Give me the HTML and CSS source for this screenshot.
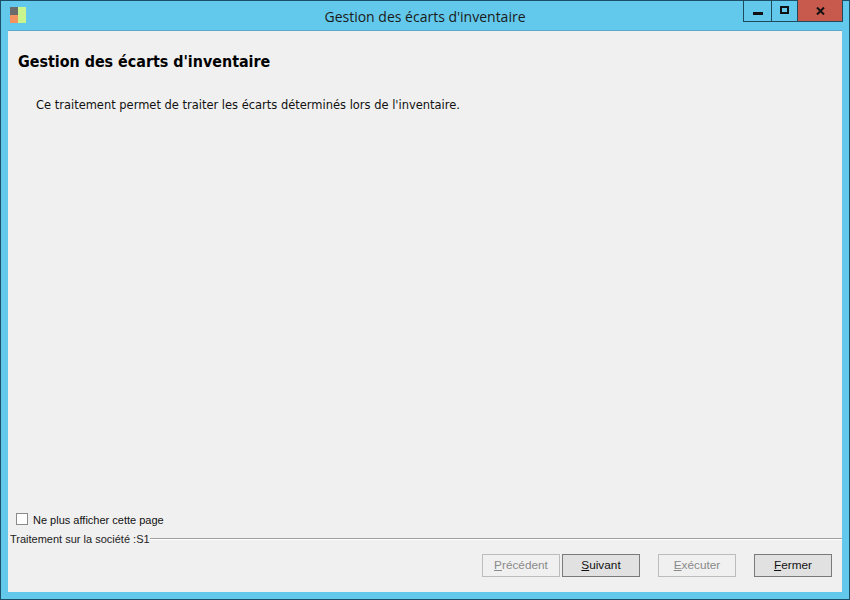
FILE: index.html
```html
<!DOCTYPE html>
<html lang="fr">
<head>
    <meta charset="UTF-8">
    <title>Gestion des écarts d'inventaire</title>
    <link rel="stylesheet" href="styles.css">
</head>
<body>
    <div class="window">
        <div class="titlebar">
            <svg class="app-icon" width="16" height="16" viewBox="0 0 16 16">
                <rect x="0" y="0" width="8" height="8" fill="#6b6b6b"/>
                <rect x="0" y="8" width="8" height="8" fill="#f59360"/>
                <rect x="8" y="0" width="8" height="16" fill="#c9f58c"/>
            </svg>
            <div class="title">Gestion des écarts d'inventaire</div>
            <div class="controls">
                <div class="ctl ctl-min"><span class="min-glyph"></span></div>
                <div class="ctl ctl-max"><span class="max-glyph"></span></div>
                <div class="ctl ctl-close">
                    <svg width="9" height="8" viewBox="0 0 9 8">
                        <path d="M1 0.5 L8 7.5 M8 0.5 L1 7.5" stroke="#111" stroke-width="2" fill="none"/>
                    </svg>
                </div>
            </div>
        </div>
        <div class="content">
            <h1>Gestion des écarts d'inventaire</h1>
            <p class="desc">Ce traitement permet de traiter les écarts déterminés lors de l'inventaire.</p>
            <div class="spacer"></div>
            <label class="check"><span class="box"></span>Ne plus afficher cette page</label>
            <div class="legend"><span>Traitement sur la société :S1</span><div class="rule"></div></div>
            <div class="buttons">
                <div class="btn disabled"><u>P</u>récédent</div>
                <div class="btn"><u>S</u>uivant</div>
                <div class="btn disabled gap"><u>E</u>xécuter</div>
                <div class="btn gap"><u>F</u>ermer</div>
            </div>
        </div>
    </div>
</body>
</html>
```

FILE: styles.css
```css
html, body {
    margin: 0;
    height: 100%;
}
.window {
    box-sizing: border-box;
    width: 850px;
    height: 600px;
    background-color: #63c9ec;
    border: 1px solid #1d4f66;
    padding: 0 7px 7px 7px;
    display: flex;
    flex-direction: column;
}
.titlebar {
    height: 29px;
    display: flex;
    position: relative;
    justify-content: center;
    flex-shrink: 0;
}
.app-icon {
    position: absolute;
    left: 2px;
    top: 6px;
}
.title {
    font-family: "Open Sans", sans-serif;
    font-size: 14px;
    color: #1a1a1a;
    margin-top: 6px;
    line-height: 20px;
}
.controls {
    position: absolute;
    top: -1px;
    right: -1px;
    display: flex;
    height: 22px;
    border: 1px solid #1f4a5e;
    border-top: none;
    box-sizing: border-box;
}
.ctl {
    display: flex;
    align-items: center;
    justify-content: center;
}
.ctl-min {
    width: 27px;
    border-right: 1px solid #1f4a5e;
}
.ctl-max {
    width: 25px;
    border-right: 1px solid #1f4a5e;
}
.ctl-close {
    width: 44px;
    background-color: #c75a4c;
}
.min-glyph {
    width: 10px;
    height: 3px;
    background: #111;
    margin-top: 5px;
}
.max-glyph {
    box-sizing: border-box;
    width: 9px;
    height: 8px;
    border: 2px solid #111;
    margin-bottom: 2px;
}
.content {
    flex: 1;
    background-color: #f0f0f0;
    display: flex;
    flex-direction: column;
    font-family: "Liberation Sans", sans-serif;
    color: #111;
    border-top: 1px solid #5aa9c8;
}
h1 {
    font-family: "DejaVu Sans", sans-serif;
    font-stretch: condensed;
    font-size: 15.9px;
    font-weight: bold;
    margin: 22px 0 0 10px;
    line-height: 18px;
    color: #000;
}
.desc {
    font-family: "DejaVu Sans", sans-serif;
    font-size: 11.48px;
    margin: 26px 0 0 28px;
    line-height: 16px;
}
.spacer {
    flex: 1;
}
.check {
    display: flex;
    align-items: center;
    font-size: 11px;
    margin-left: 8px;
    height: 16px;
}
.box {
    box-sizing: border-box;
    width: 12px;
    height: 12px;
    background: #fff;
    border: 1px solid #8a8a8a;
    margin: 0 5px 3px 0;
}
.legend {
    display: flex;
    align-items: center;
    font-size: 11px;
    margin: 4px 0 0 2px;
    height: 14px;
    color: #222;
}
.rule {
    flex: 1;
    height: 1px;
    background: #a0a0a0;
    border-bottom: 1px solid #fff;
}
.buttons {
    display: flex;
    justify-content: flex-end;
    gap: 2px;
    margin: 8px 10px 15px 0;
}
.btn {
    box-sizing: border-box;
    width: 78px;
    height: 23px;
    line-height: 21px;
    text-align: center;
    font-size: 11.8px;
    background: #e1e1e1;
    border: 1px solid #7a7a7a;
    color: #111;
}
.btn.disabled {
    background: #f0f0f0;
    border-color: #bcbcbc;
    color: #8a8a8a;
}
.btn.gap {
    margin-left: 16px;
}
```
